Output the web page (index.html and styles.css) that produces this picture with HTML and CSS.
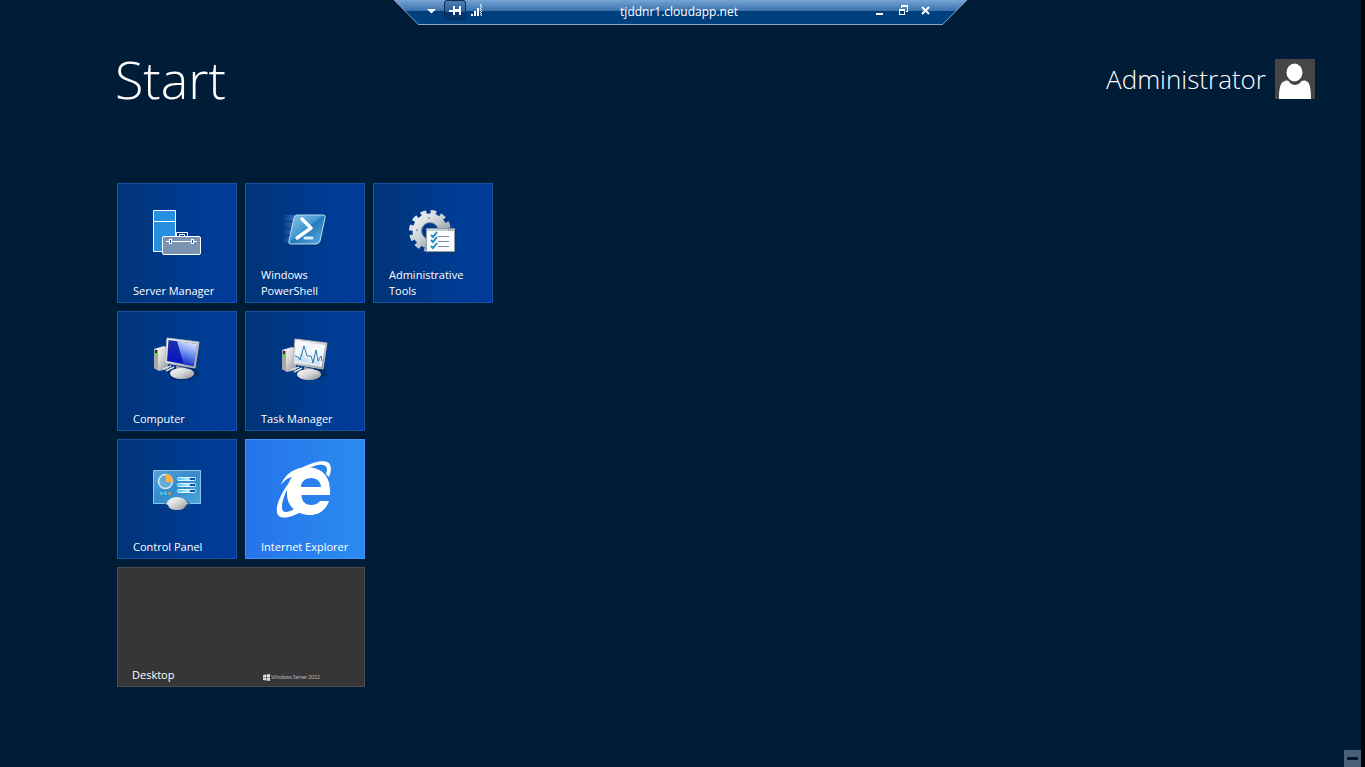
FILE: index.html
```
<!DOCTYPE html>
<html lang="en">
<head>
<meta charset="utf-8">
<title>Start</title>
<link rel="stylesheet" href="styles.css">
</head>
<body>
<div class="screen">
  <div class="connection">
    <div class="connection-face">
      <div class="bar-group">
        <button class="bar-button" type="button" aria-label="Menu"><svg width="22" height="20" viewBox="0 0 22 20"><path d="M6 9h9l-4.500 4.500z" fill="#fff"/></svg></button>
        <button class="bar-button pinned" type="button" aria-label="Pin"><svg width="20" height="18" viewBox="0 0 20 18" fill="#fff" shape-rendering="crispEdges"><path d="M4 9h4v2H4zM8 5h2v9H8zM10 8h5v3h-5zM14 5h2v9h-2z"/></svg></button>
        <button class="bar-button" type="button" aria-label="Signal"><svg width="22" height="20" viewBox="0 0 22 20" fill="#fff" shape-rendering="crispEdges"><path d="M5 14h2v2H5zM8 11h2v5H8zM11 8h2v8h-2z"/><path d="M14.500 4v12M15.500 5v12" stroke="#fff" stroke-dasharray="1 1"/></svg></button>
      </div>
      <span class="address">tjddnr1.cloudapp.net</span>
      <div class="bar-group bar-right">
        <button class="bar-button" type="button" aria-label="Minimize"><svg width="22" height="20" viewBox="0 0 22 20"><path d="M7 13h7v2H7z" fill="#fff"/></svg></button>
        <button class="bar-button" type="button" aria-label="Restore"><svg width="22" height="20" viewBox="0 0 22 20" fill="#fff" shape-rendering="crispEdges"><path d="M9 5h7v7h-2v-1h1V7h-5v1H9zM7 9h6v6H7zM8 11v3h4v-3z" fill-rule="evenodd"/></svg></button>
        <button class="bar-button" type="button" aria-label="Close"><svg width="22" height="20" viewBox="0 0 22 20"><path d="M7 7l7 7M14 7l-7 7" stroke="#fff" stroke-width="2"/></svg></button>
      </div>
    </div>
  </div>

  <header class="top">
    <h1 class="title">Start</h1>
    <button class="user" type="button">
      <span>Administrator</span>
      <svg width="40" height="40" viewBox="0 0 40 40"><path fill="#464646" d="M0 0h40v40H0z"/><path fill="#fff" d="M4 40c0-10 1-17 6-18 3-1 4 0 5 2q5 4 10 0c1-2 3-3 6-2 4 1 5 8 5 18z"/><ellipse cx="19.500" cy="13.500" rx="8" ry="9" fill="#fff"/></svg>
    </button>
  </header>

  <main class="tiles">
    <a class="tile" href="#server-manager">
      <svg class="icon" viewBox="0 0 60 60"><g stroke="#fff"><path fill="#278fdf" d="M6.500 8.500h22v41h-22zM6.500 19.500h22"/><path fill="none" d="M29.500 34v-3.500h11V34M32.500 34v-1.500h5V34"/><rect x="15.500" y="34.500" width="38" height="18" rx="1.500" fill="#7b93b1"/><path d="M19 39.500h31"/></g><path fill="#fff" d="M22 37h3v5h-3zM44 37h3v5h-3z"/><path fill="#17549c" d="M23 38h1v3h-1zM45 38h1v3h-1z"/></svg>
      <span class="label">Server Manager</span>
    </a>
    <a class="tile" href="#powershell">
      <svg class="icon" viewBox="-2 1 60 60">
        <defs><linearGradient id="ps" x1="0" y1="0" x2="1" y2="1"><stop offset="0" stop-color="#8cc5e3"/><stop offset=".45" stop-color="#4499d1"/><stop offset=".5" stop-color="#2479bd"/><stop offset="1" stop-color="#64b1dc"/></linearGradient><linearGradient id="trail"><stop offset="0" stop-color="#80b9ed" stop-opacity="0"/><stop offset="1" stop-color="#80b9ed" stop-opacity=".5"/></linearGradient></defs>
        <path fill="url(#trail)" d="M7 14h13l-1 6H6zM6 21h13l-2 6H6zM6 28h11l-1 6H5zM5 35h11l-2 7H5z"/>
        <path fill="#062f6d" opacity=".5" d="M20 17h29l-6 25q-1 3-4 3H16z"/>
        <path fill="url(#ps)" stroke="#b8deef" d="M20 14h26q3 0 2 3l-5 23q-1 3-4 3H14q-3 0-2-3l5-23q1-3 3-3z"/>
        <path d="M25 18l9 9-14 10" fill="none" stroke="#fff" stroke-width="3.500" stroke-linecap="round" stroke-linejoin="round"/><path d="M28 37h7" stroke="#d4eefb" stroke-width="3" stroke-linecap="round"/>
      </svg>
      <span class="label">Windows<br>PowerShell</span>
    </a>
    <a class="tile" href="#admin-tools">
      <svg class="icon" viewBox="-1 1 60 60">
        <defs><linearGradient id="gear" x1="0" y1="0" x2="1" y2="1"><stop offset="0" stop-color="#eef0f2"/><stop offset=".5" stop-color="#c5cbd1"/><stop offset="1" stop-color="#7d8792"/></linearGradient></defs>
        <circle cx="26" cy="30" r="18.500" fill="none" stroke="url(#gear)" stroke-width="5" stroke-dasharray="5.500 4.190"/>
        <circle cx="26" cy="30" r="13" fill="none" stroke="url(#gear)" stroke-width="9"/>
        <circle cx="26" cy="30" r="8.500" fill="none" stroke="#8b99aa"/><circle cx="25" cy="17" r="1" fill="#8a96a3"/><circle cx="13" cy="29" r="1" fill="#8a96a3"/>
        <path fill="#12366b" opacity=".5" d="M24 29h28v24H24z"/>
        <path fill="#f9fbfd" stroke="#8e9aa6" d="M22.500 27.500h28v23h-28z"/><path fill="#c8d0d7" d="M23 28h27v2H23z"/><path d="M44 29h5" stroke="#626d78" stroke-dasharray="1 1"/>
        <path d="M34 35.500h11M34 40.500h11M34 45.500h11" stroke="#818d99"/>
        <path d="M27 34l2 2 4-5M27 39l2 2 4-5M27 45l2 2 4-5" fill="none" stroke="#258bc6" stroke-width="2"/>
      </svg>
      <span class="label">Administrative<br>Tools</span>
    </a>
    <a class="tile first" href="#computer">
      <svg class="icon" viewBox="0 -1 60 60">
        <defs><linearGradient id="metal" x1="0" y1="0" x2="1" y2="1"><stop offset="0" stop-color="#fff"/><stop offset=".5" stop-color="#d5d6d7"/><stop offset="1" stop-color="#8a8c91"/></linearGradient><linearGradient id="screen" x1="0" y1="0" x2="0" y2="1"><stop offset="0" stop-color="#1c2fae"/><stop offset="1" stop-color="#0510c0"/></linearGradient><linearGradient id="glare" x1=".7" y1="0" x2=".4" y2="1"><stop offset="0" stop-color="#e4edff"/><stop offset=".5" stop-color="#6f90ee"/><stop offset="1" stop-color="#0b20cc"/></linearGradient></defs>
        <path fill="#05275e" opacity=".6" d="M19 37h30l4 7-11 5H24z"/>
        <path fill="url(#metal)" d="M7 18l10-3 4 2v21l-9 2-5-3z"/><path fill="#a5a7ab" d="M7 18l4 1v20l-4-2z"/><path fill="#222c32" d="M8 19h2v3H8z"/><path fill="#4be324" d="M8 22h2v3H8z"/>
        <path d="M16 38l8-3M19 40l8-4" stroke="#dcdcdc" stroke-width="1.500"/>
        <path fill="#a7a9ac" d="M29 35l10 2v6h-9z"/><ellipse cx="35" cy="42.500" rx="12" ry="5.500" fill="url(#metal)"/>
        <path fill="url(#metal)" stroke="#b9b9b9" d="M20 7l32 4-4 26-30-5z"/>
        <path fill="url(#screen)" d="M21.500 9l28.500 4-3.500 22-26.500-5z"/><path fill="url(#glare)" d="M30 10l20 3-3.500 22-10-2z"/>
      </svg>
      <span class="label">Computer</span>
    </a>
    <a class="tile" href="#task-manager">
      <svg class="icon" viewBox="0 -1 60 60">
        <path fill="#05275e" opacity=".6" d="M19 37h30l4 7-11 5H24z"/>
        <path fill="url(#metal)" d="M7 19l10-3 4 2v21l-9 2-5-3z"/><path fill="#a5a7ab" d="M7 19l4 1v20l-4-2z"/><path fill="#222c32" d="M8 20h2v3H8z"/><path fill="#4be324" d="M8 23h2v3H8z"/>
        <path d="M16 39l8-3M19 41l8-4" stroke="#dcdcdc" stroke-width="1.500"/>
        <path fill="#a7a9ac" d="M29 36l10 2v6h-9z"/><ellipse cx="34" cy="43.500" rx="12" ry="5.500" fill="url(#metal)"/>
        <path fill="url(#metal)" stroke="#b9b9b9" d="M20 8l32 4-4 26-30-5z"/>
        <path fill="#f4f8fb" d="M21.500 10l28.500 4-3.500 22-26.500-5z"/><path fill="#cfe1f3" d="M20 26l3 1 4-7 3 7 4 1 2 4 3-9 2 7 5-1-1 6-25-5z"/>
        <path d="M20 25l3 1 2 3 4-14 3 10h4l2 7 3-13 2 11 3-5 1 5" fill="none" stroke="#237cb0"/>
      </svg>
      <span class="label">Task Manager</span>
    </a>
    <a class="tile first" href="#control-panel">
      <svg class="icon" viewBox="0 0 60 60">
        <defs><linearGradient id="panel" x1="0" y1="0" x2="1" y2="1"><stop offset="0" stop-color="#53a3dc"/><stop offset=".5" stop-color="#358ac9"/><stop offset="1" stop-color="#4aa9df"/></linearGradient><linearGradient id="slide"><stop offset="0" stop-color="#38b8f2"/><stop offset=".65" stop-color="#d2f3ff"/><stop offset=".7" stop-color="#0752a3"/></linearGradient></defs>
        <path fill="url(#panel)" stroke="#8dc5e9" d="M6.500 12.500h47v33h-47z"/>
        <circle cx="18.500" cy="23.500" r="7" fill="#63abd9" stroke="#d5eaf6" stroke-width="1.500"/><path fill="#ffb044" d="M19 24v-8q7 0 7 8z"/>
        <g fill="url(#slide)" stroke="#d9f5ff"><rect x="30.500" y="19.500" width="18" height="3" rx="1"/><rect x="30.500" y="25.500" width="18" height="3" rx="1"/><rect x="30.500" y="31.500" width="18" height="3" rx="1"/></g>
        <g fill="#23a2dd" stroke="#5ff3ff"><circle cx="14.500" cy="35.500" r="1"/><circle cx="18.500" cy="35.500" r="1"/></g><circle cx="22.500" cy="35.500" r="1" stroke="#ffb13b" fill="#b5611b"/>
        <path fill="#164c85" opacity=".5" d="M17 46q14-13 27 0l-3 5H21z"/>
        <path fill="url(#metal)" d="M19 46q3-7 11-7t11 7l-2 1q-1 5-9 5t-9-5z"/>
      </svg>
      <span class="label">Control Panel</span>
    </a>
    <a class="tile explorer" href="#internet-explorer">
      <svg class="icon" viewBox="-1 -1 60 60">
        <path fill="#fff" fill-rule="evenodd" d="M33 8.500C44 8.500 54 16 54 31v5H25.500C25.500 42 29 46 35 46c4 0 7-1.500 9-4h9C50 51 43 56 34 56 22 56 11 48 11 35 11 18 22 8.500 33 8.500zM25 28h20c0-5-4-9-10-9s-10 4-10 9z"/>
        <path fill="#fff" fill-rule="evenodd" d="M5 26Q10 12 26 8.500C37 3 48 0 53 4c3 4 2 9 0 14l-3-3c2-6 1-8-3-9-5-1-10 1-15 4C17 16 10 31 7 41c-2 8-1 11 2 12 4 0 8-2 12-5l5 4C17 58 6 61 2 56-1 51 2 41 8 31c3-5 7-10 12-14Q10 18 5 26z"/>
      </svg>
      <span class="label">Internet Explorer</span>
    </a>
    <a class="tile desktop first" href="#desktop">
      <span class="label">Desktop</span>
      <span class="edition"><svg width="7" height="7" viewBox="0 0 7 7"><path fill="#ddd" d="M0 1l3-.5V3H0zM3.500.5L7 0v3H3.500zM0 3.500h3v3L0 6zM3.500 3.500H7V7l-3.500-.5z"/></svg>Windows Server 2012</span>
    </a>
  </main>
  <button class="zoom-out" type="button" aria-label="Zoom out"><span class="dash"></span></button>
</div>
</body>
</html>
```
FILE: styles.css
```
* { box-sizing: border-box; }
body {
  margin: 0;
  background: #000;
  color: #fff;
  font-family: "Open Sans", "Noto Sans", sans-serif;
}
button {
  margin: 0;
  padding: 0;
  border: 0;
  background: none;
  color: inherit;
  font: inherit;
}
svg { display: block; flex: none; }
.screen {
  position: relative;
  min-height: 100vh;
  margin-right: 4px;
  background: #001c37;
}
.connection {
  width: 574px;
  max-width: 100%;
  height: 25px;
  margin: 0 auto;
  background: #91a6bd;
  clip-path: polygon(0 0, 100% 0, calc(100% - 25px) 100%, 25px 100%);
}
.connection-face {
  display: grid;
  grid-template-columns: 1fr auto 1fr;
  align-items: start;
  height: 24px;
  padding: 0 30px 0 27px;
  background: linear-gradient(#78a5d3, #3970ad 11px, #003f7d 11px, #00407f);
  clip-path: polygon(1px 0, calc(100% - 1px) 0, calc(100% - 25px) 100%, 25px 100%);
}
.bar-group { display: flex; align-items: flex-start; }
.bar-right { justify-content: flex-end; }
.bar-button { width: 23px; }
.bar-button.pinned {
  width: 22px;
  height: 20px;
  border: 1px solid #092b54;
  border-radius: 3px;
  background: linear-gradient(#4e7eb3, #285b93 11px, #04356c 11px);
}
.address {
  font-size: 12px;
  line-height: 23px;
}
.top {
  display: flex;
  justify-content: space-between;
  align-items: center;
  height: 108px;
  padding: 0 46px 0 115px;
}
.title {
  margin: 0;
  font-size: 52px;
  font-weight: 300;
  line-height: 64px;
}
.user {
  display: flex;
  align-items: center;
  gap: 9px;
  font-size: 26px;
  font-weight: 300;
}
.tiles {
  display: grid;
  grid-template-columns: repeat(3, 120px);
  grid-auto-rows: 120px;
  gap: 8px;
  padding: 50px 0 80px 117px;
}
.tile {
  display: flex;
  flex-direction: column;
  position: relative;
  border: 1px solid #1552a0;
  background: linear-gradient(90deg, #003477, #003c94 70%, #003b9b);
  color: #fff;
  font-size: 11px;
  line-height: 16px;
  text-decoration: none;
}
.first { grid-column-start: 1; }
.icon {
  position: absolute;
  top: 18px;
  left: 29px;
  width: 60px;
  height: 60px;
}
.label { margin: auto 0 3px 15px; }
.explorer {
  border-color: #4193f4;
  background: linear-gradient(90deg, #2673e9, #2b8cf0);
}
.desktop {
  grid-column: 1 / span 2;
  flex-direction: row;
  align-items: flex-end;
  border-color: #4b4b4b;
  background: #363636;
}
.desktop .label { margin: 0 0 3px 14px; }
.edition {
  display: flex;
  align-items: center;
  gap: 1px;
  margin: 0 44px 1px auto;
  color: #bbb;
  font-family: Lato, sans-serif;
  font-size: 5px;
}
.zoom-out {
  display: grid;
  place-items: center;
  position: absolute;
  right: 0;
  bottom: 0;
  width: 17px;
  height: 17px;
  background: #4a6078;
}
.dash { width: 11px; height: 3px; background: #04152a; }
```
